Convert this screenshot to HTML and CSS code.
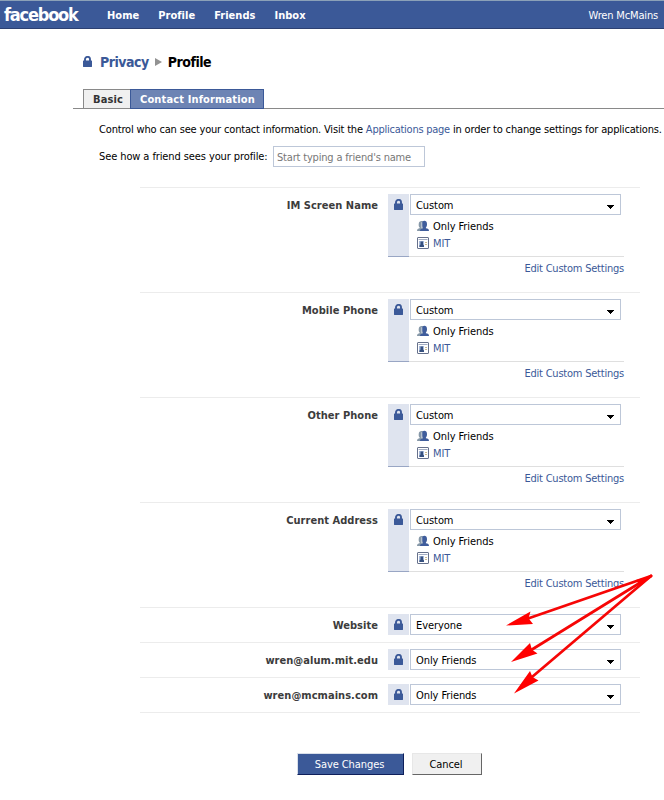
FILE: index.html
```
<!DOCTYPE html>
<html lang="en">
<head>
<meta charset="utf-8">
<title>Facebook | Privacy</title>
<link rel="stylesheet" href="styles.css">
</head>
<body>
<svg class="defs" width="0" height="0">
  <symbol id="lock" viewBox="0 0 9 11"><path d="M2 5.500V3.300a2.500 2.400 0 0 1 5 0v2.200" fill="none" stroke="currentColor" stroke-width="1.900"/><rect y="4.500" width="9" height="6.500" rx=".4" fill="currentColor"/></symbol>
  <symbol id="friends" viewBox="0 0 12 11"><path d="M0 10.500C0 8.500 1 8 3 7.500 2 6.500 1.500 5.500 1.700 3.500 1.900 1.200 3 .5 4.600.5c1 0 1.700.3 2 1L5.500 10.500z" fill="#8698a8"/><path d="M3 10.500C3 8.800 4 8.300 5.900 7.800V6.900C5 6.100 4.900 5.100 4.900 3.500 4.900 1.500 5.900.3 7.400.3s2.600 1.200 2.600 3.200c0 1.600-.2 2.600-1.100 3.400v.9c2.100.4 3.100 1 3.100 2.700z" fill="#3f5d9c"/><path d="M4.800 1.800v6" stroke="#dfe5ee" stroke-width=".8"/></symbol>
  <symbol id="network" viewBox="0 0 12 12"><rect x=".5" y=".5" width="11" height="11" rx=".5" fill="#fff" stroke="#66718c"/><path d="M1.500 2.500h9" stroke="#a3adc2"/><rect x="2" y="4" width="5" height="6" fill="#a9bbdb"/><path d="M3.500 4.500h2.500v3l1 1V10H2.500V8.500l1-1z" fill="#36507f"/><path d="M8 5.500h2M8 7.500h2" stroke="#c9b98d"/></symbol>
  <symbol id="caret" viewBox="0 0 7 4"><path d="M0 0h7v1H6v1H5v1H4v1H3V3H2V2H1V1H0z" fill="#000"/></symbol>
</svg>

<header class="bar">
  <span class="logo">facebook</span>
  <nav><a>Home</a><a>Profile</a><a>Friends</a><a>Inbox</a></nav>
  <span class="user">Wren McMains</span>
</header>

<main>
  <h1><svg class="lock"><use href="#lock"/></svg><a>Privacy</a><i class="crumb"></i><span>Profile</span></h1>
  <div class="tabs"><span class="tab">Basic</span><span class="tab active">Contact Information</span></div>

  <p class="intro"><span>Control who can see your contact information. Visit the </span><a>Applications page</a><span> in order to change settings for applications.</span></p>
  <div class="preview"><label for="friend">See how a friend sees your profile:</label><input id="friend" type="text" placeholder="Start typing a friend's name"></div>

  <section class="settings">
    <div class="row tall">
      <span class="label">IM Screen Name</span>
      <div class="strip"><svg class="lock"><use href="#lock"/></svg></div>
      <div class="control">
        <div class="select">Custom<svg class="caret"><use href="#caret"/></svg></div>
        <ul><li><svg><use href="#friends"/></svg>Only Friends</li><li><svg><use href="#network"/></svg><a>MIT</a></li></ul>
      </div>
      <a class="edit">Edit Custom Settings</a>
    </div>
    <div class="row tall">
      <span class="label">Mobile Phone</span>
      <div class="strip"><svg class="lock"><use href="#lock"/></svg></div>
      <div class="control">
        <div class="select">Custom<svg class="caret"><use href="#caret"/></svg></div>
        <ul><li><svg><use href="#friends"/></svg>Only Friends</li><li><svg><use href="#network"/></svg><a>MIT</a></li></ul>
      </div>
      <a class="edit">Edit Custom Settings</a>
    </div>
    <div class="row tall">
      <span class="label">Other Phone</span>
      <div class="strip"><svg class="lock"><use href="#lock"/></svg></div>
      <div class="control">
        <div class="select">Custom<svg class="caret"><use href="#caret"/></svg></div>
        <ul><li><svg><use href="#friends"/></svg>Only Friends</li><li><svg><use href="#network"/></svg><a>MIT</a></li></ul>
      </div>
      <a class="edit">Edit Custom Settings</a>
    </div>
    <div class="row tall">
      <span class="label">Current Address</span>
      <div class="strip"><svg class="lock"><use href="#lock"/></svg></div>
      <div class="control">
        <div class="select">Custom<svg class="caret"><use href="#caret"/></svg></div>
        <ul><li><svg><use href="#friends"/></svg>Only Friends</li><li><svg><use href="#network"/></svg><a>MIT</a></li></ul>
      </div>
      <a class="edit">Edit Custom Settings</a>
    </div>
    <div class="row">
      <span class="label">Website</span>
      <div class="strip"><svg class="lock"><use href="#lock"/></svg></div>
      <div class="control"><div class="select">Everyone<svg class="caret"><use href="#caret"/></svg></div></div>
    </div>
    <div class="row">
      <span class="label">wren@alum.mit.edu</span>
      <div class="strip"><svg class="lock"><use href="#lock"/></svg></div>
      <div class="control"><div class="select">Only Friends<svg class="caret"><use href="#caret"/></svg></div></div>
    </div>
    <div class="row">
      <span class="label">wren@mcmains.com</span>
      <div class="strip"><svg class="lock"><use href="#lock"/></svg></div>
      <div class="control"><div class="select">Only Friends<svg class="caret"><use href="#caret"/></svg></div></div>
    </div>
  </section>

  <div class="actions"><button class="save">Save Changes</button><button class="cancel">Cancel</button></div>
</main>

<svg class="arrows" viewBox="500 570 160 130">
  <g stroke="#f60606" stroke-width="2.700" stroke-linecap="round"><path d="M651 576 528 618.500"/><path d="M651 576 532 649.500"/><path d="M651 576 532 677"/></g>
  <g fill="#f00"><path d="M506 625.500 530.500 611.500 528.500 618.300 533 624z"/><path d="M511 662 530 643 532 649.700 537.500 653.500z"/><path d="M514 693.500 530 671 532.500 677 538.500 680.500z"/><path d="M653 575.500 636 580 640 586z"/></g>
</svg>
</body>
</html>
```

FILE: styles.css
```
* { box-sizing: border-box; }
body {
  margin: 0;
  height: 800px;
  position: relative;
  overflow: hidden;
  background: #fff;
  color: #000;
  font: 11px/14px "DejaVu Sans Condensed", "DejaVu Sans", sans-serif;
}
.defs { position: absolute; }
a { color: #3b5998; }

.bar {
  display: flex;
  align-items: center;
  height: 29px;
  padding: 0 6px 0 4px;
  background: #3b5998;
  border-top: 1px solid #8ba1b8;
  border-bottom: 1px solid #2c4072;
  color: #fff;
}
.logo { width: 103px; font-size: 18px; line-height: 26px; font-weight: bold; letter-spacing: -1.2px; padding-top: 1px; }
.bar nav { display: flex; gap: 19px; font-weight: bold; letter-spacing: .03px; padding-top: 2px; }
.bar nav a { color: #fff; }
.user { margin-left: auto; letter-spacing: -.16px; padding-top: 2px; }

main { padding-left: 73px; }
h1 {
  display: flex;
  align-items: center;
  margin: 0;
  padding: 23px 0 0 10px;
  font-size: 14px;
  line-height: 20px;
  letter-spacing: -.48px;
}
.lock { display: block; width: 9px; height: 11px; color: #3b5998; }
h1 .lock { margin: -2px 8px 0 0; }
.crumb {
  margin: 0 6px;
  border-left: 7px solid #929292;
  border-top: 4px solid transparent;
  border-bottom: 4px solid transparent;
}
.tabs {
  display: flex;
  margin-top: 17px;
  height: 20px;
  padding-left: 10px;
  border-bottom: 1px solid #898989;
  font-weight: bold;
  letter-spacing: .14px;
}
.tab {
  height: 19px;
  line-height: 19px;
  padding-left: 9px;
  width: 47px;
  background: #f0f0f0;
  border: 1px solid #898989;
  border-width: 1px 0 0 1px;
  color: #333;
}
.tab.active {
  width: 134px;
  height: 20px;
  background: #6d84b4;
  border: 1px solid #3b5998;
  color: #fff;
}

.intro { margin: 14px 0 0 26px; white-space: pre; letter-spacing: -.17px; }
.intro a { letter-spacing: -.25px; }
.preview { display: flex; align-items: center; margin: 9px 0 0 26px; letter-spacing: -.1px; }
.preview label { width: 174px; padding-top: 1px; }
.preview input {
  width: 152px;
  height: 21px;
  padding: 1px 3px 0;
  border: 1px solid #bdc7d8;
  font: inherit;
  letter-spacing: -.18px;
}
.preview input::placeholder { color: #777; opacity: 1; }

.settings { width: 500px; margin: 20px 0 0 67px; border-bottom: 1px solid #ececec; }
.row {
  display: grid;
  grid-template-columns: 248px 21px 215px;
  grid-template-rows: 21px;
  height: 35px;
  padding-top: 6px;
  border-top: 1px solid #ececec;
}
.row.tall { height: 105px; grid-template-rows: 63px 22px; }
.label { padding-right: 10px; text-align: right; line-height: 23px; font-weight: bold; color: #3c3c3c; letter-spacing: .04px; }
.strip { background: #dfe4ef; padding: 5px 0 0 6px; }
.tall .strip { border-bottom: 1px solid #99a6c4; }
.control { padding-left: 1px; }
.tall .control { border-bottom: 1px solid #dfdfdf; }
.select {
  display: flex;
  justify-content: space-between;
  width: 211px;
  height: 21px;
  padding: 0 6px 0 5px;
  border: 1px solid #bdc7d8;
  background: #fff;
  line-height: 21px;
  letter-spacing: -.08px;
}
.caret { width: 7px; height: 4px; margin-top: 10px; }
ul { list-style: none; margin: 3px 0 0; padding: 0 0 0 7px; }
li { display: flex; align-items: center; height: 17px; letter-spacing: -.06px; }
li svg { width: 12px; height: 12px; margin: -1px 4px 0 0; }
.edit { grid-column: 1 / 4; justify-self: end; padding-top: 5px; letter-spacing: -.22px; }

.actions { display: flex; gap: 8px; margin: 40px 0 0 224px; }
button { height: 22px; padding: 1px 0 0; font: inherit; letter-spacing: -.08px; border: 1px solid; }
.save { width: 107px; padding-right: 2px; background: #3b5998; color: #fff; border-color: #d9dfea #0e1f5b #0e1f5b #d9dfea; }
.cancel { width: 70px; padding-right: 2px; background: #f0f0f0; color: #000; border-color: #e7e7e7 #666 #666 #e7e7e7; }

.arrows { position: absolute; left: 500px; top: 570px; width: 160px; height: 130px; }
```
